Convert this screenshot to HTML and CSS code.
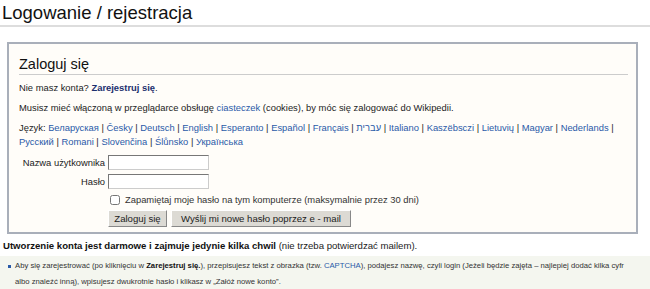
FILE: index.html
```html
<!DOCTYPE html>
<html>
<head>
    <title>Logowanie / rejestracja</title>
    <link rel="stylesheet" href="styles.css">
</head>
<body>
    <h1 class="page-title">Logowanie / rejestracja</h1>

    <!-- Login form -->
    <div class="login-box">
        <h2>Zaloguj się</h2>
        <p>Nie masz konta? <a href="#" class="strong-link">Zarejestruj się</a>.</p>
        <p>Musisz mieć włączoną w przeglądarce obsługę <a href="#">ciasteczek</a> (cookies), by móc się zalogować do Wikipedii.</p>
        <p class="languages">Język: <a href="#">Беларуская</a> | <a href="#">Česky</a> | <a href="#">Deutsch</a> | <a href="#">English</a> | <a href="#">Esperanto</a> | <a href="#">Español</a> | <a href="#">Français</a> | <a href="#">עברית</a> | <a href="#">Italiano</a> | <a href="#">Kaszëbsczi</a> | <a href="#">Lietuvių</a> | <a href="#">Magyar</a> | <a href="#">Nederlands</a> |<br><a href="#">Русский</a> | <a href="#">Romani</a> | <a href="#">Slovenčina</a> | <a href="#">Ślůnsko</a> | <a href="#">Українська</a></p>

        <div class="form-grid">
            <label for="user">Nazwa użytkownika</label>
            <input type="text" id="user">
            <label for="pass">Hasło</label>
            <input type="password" id="pass">
            <span></span>
            <div class="remember">
                <input type="checkbox" id="remember">
                <label for="remember">Zapamiętaj moje hasło na tym komputerze (maksymalnie przez 30 dni)</label>
            </div>
            <span></span>
            <div class="buttons">
                <button class="login-btn">Zaloguj się</button>
                <button class="mail-btn">Wyślij mi nowe hasło poprzez e - mail</button>
            </div>
        </div>
    </div>

    <p class="free-note"><b>Utworzenie konta jest darmowe i zajmuje jedynie kilka chwil</b> (nie trzeba potwierdzać mailem).</p>

    <div class="help-box">
        <ul>
            <li>Aby się zarejestrować (po kliknięciu w <b>Zarejestruj się.</b>), przepisujesz tekst z obrazka (tzw. <a href="#">CAPTCHA</a>), podajesz nazwę, czyli login (Jeżeli będzie zajęta – najlepiej dodać kilka cyfr albo znaleźć inną), wpisujesz dwukrotnie hasło i klikasz w „Załóż nowe konto”.</li>
        </ul>
    </div>
</body>
</html>
```

FILE: styles.css
```css
body {
    font-family: "Liberation Sans", Arial, sans-serif;
    font-size: 9.4px;
    color: #222;
    background-color: #fff;
    margin: 0;
    height: 289px;
    overflow: hidden;
}
a {
    color: #2a5aa8;
    text-decoration: none;
}
.page-title {
    font-size: 18.5px;
    font-weight: normal;
    color: #111;
    margin: 0;
    padding: 3px 0 2px 2px;
    line-height: 20px;
    border-bottom: 2px solid #ddd;
}
.login-box {
    margin: 15px 12px 0 7px;
    padding: 12px 8px 5px 10px;
    border: 2px solid #a9afba;
    background-color: #fffdf9;
}
.login-box h2 {
    font-size: 14.5px;
    font-weight: normal;
    color: #111;
    margin: 0 0 6px 0;
    line-height: 17px;
    padding-bottom: 1px;
    border-bottom: 1px solid #ccc;
}
.login-box p {
    margin: 0 0 6px 0;
    line-height: 14px;
}
.strong-link {
    color: #1c2f6e;
    font-weight: bold;
}
.form-grid {
    display: grid;
    grid-template-columns: 86px auto;
    column-gap: 3px;
    row-gap: 4px;
    margin-top: 5px;
    align-items: center;
}
.form-grid > label {
    text-align: right;
    white-space: nowrap;
}
.form-grid input[type=text],
.form-grid input[type=password] {
    width: 101px;
    height: 15px;
    box-sizing: border-box;
    border: 1px solid #777;
    border-right-color: #ccc;
    border-bottom-color: #ccc;
    background-color: #fff;
    margin: 0;
    padding: 0;
}
.remember {
    display: flex;
    align-items: center;
    gap: 5px;
    color: #333;
    height: 13px;
}
.remember input {
    margin: 0 0 0 2px;
    width: 10px;
    height: 10px;
}
.buttons {
    display: flex;
    gap: 4px;
}
.buttons button {
    font-family: "Liberation Sans", Tahoma, sans-serif;
    font-size: 9.6px;
    color: #222;
    height: 17px;
    padding: 0;
    background-color: #dcdad4;
    border: 1px solid;
    border-color: #fff #888 #888 #fff;
    border-radius: 0;
}
.login-btn {
    width: 59px;
}
.mail-btn {
    width: 180px;
}
.free-note {
    margin: 5px 0 0 3px;
    line-height: 14px;
    font-size: 9.6px;
}
.free-note b {
    color: #111;
}
.help-box {
    background-color: #f4f6ef;
    margin-top: 3px;
    padding: 2px 0 10px 0;
    font-size: 7.7px;
    color: #333;
}
.help-box ul {
    margin: 0;
    padding: 0 24px 0 15px;
    list-style: none;
}
.help-box li {
    position: relative;
    line-height: 16px;
}
.help-box li::before {
    content: "";
    position: absolute;
    left: -7px;
    top: 7px;
    width: 3px;
    height: 3px;
    background-color: #2a5aa8;
}
.help-box b {
    color: #111;
}
```
